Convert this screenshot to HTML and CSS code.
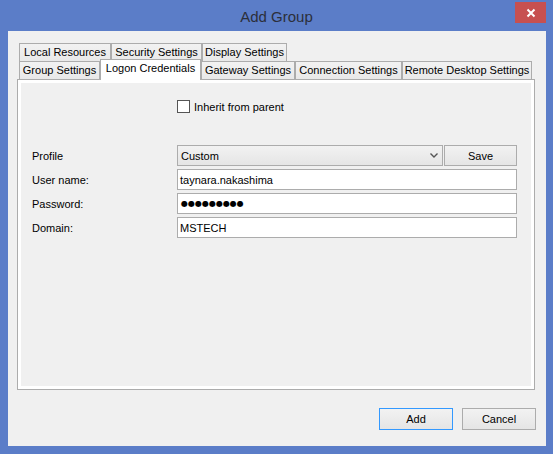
FILE: index.html
```html
<!DOCTYPE html>
<html>
	<head>
		<title>Add Group</title>
		<link rel="stylesheet" href="styles.css">
	</head>
	<body>
		<div class="window">
			<div class="titlebar">
				<span></span>
				<div class="title">Add Group</div>
				<div class="closeButton">
					<svg width="10" height="10" viewBox="0 0 10 10">
						<path d="M1.5 1.5 L8.5 8.5 M8.5 1.5 L1.5 8.5" stroke="#fff" stroke-width="2" fill="none"/>
					</svg>
				</div>
			</div>
			<div class="client">
				<div class="tabControl">
					<div class="tabRow">
						<div class="tab tabLocal">Local Resources</div>
						<div class="tab tabSecurity">Security Settings</div>
						<div class="tab tabDisplay">Display Settings</div>
					</div>
					<div class="tabRow">
						<div class="tab tabGroup">Group Settings</div>
						<div class="tab tabLogon selected">Logon Credentials</div>
						<div class="tab tabGateway">Gateway Settings</div>
						<div class="tab tabConnection">Connection Settings</div>
						<div class="tab tabRemote">Remote Desktop Settings</div>
					</div>
					<div class="tabPanel">
						<div class="tabPage">
							<div class="inheritRow">
								<span class="checkbox"></span>
								<span>Inherit from parent</span>
							</div>
							<div class="credentialsForm">
								<div class="fieldLabel">Profile</div>
								<div class="profileRow">
									<div class="comboBox">
										<span>Custom</span>
										<svg width="8" height="5" viewBox="0 0 8 5">
											<path d="M0.5 0.5 L4 4 L7.5 0.5" stroke="#555" stroke-width="1.4" fill="none"/>
										</svg>
									</div>
									<div class="button saveButton">Save</div>
								</div>
								<div class="fieldLabel">User name:</div>
								<div class="textBox">taynara.nakashima</div>
								<div class="fieldLabel">Password:</div>
								<div class="textBox passwordBox">●●●●●●●●●</div>
								<div class="fieldLabel">Domain:</div>
								<div class="textBox">MSTECH</div>
							</div>
						</div>
					</div>
				</div>
				<div class="dialogButtons">
					<div class="button default">Add</div>
					<div class="button">Cancel</div>
				</div>
			</div>
		</div>
	</body>
</html>
```

FILE: styles.css
```css
html, body {
	margin: 0px;
	padding: 0px;
}

body {
	width: 553px;
	height: 454px;
	background-color: #5b7dc8;
	font-family: "Liberation Sans", Arial, sans-serif;
	font-size: 11px;
	color: #000;
	overflow: hidden;
}

.window {
	display: flex;
	flex-direction: column;
	height: 100%;
}

.titlebar {
	display: grid;
	grid-template-columns: 1fr auto 1fr;
	height: 31px;
	flex-shrink: 0;
}

.title {
	font-size: 15px;
	color: #2b2f3a;
	padding-top: 9px;
	line-height: 15px;
}

.closeButton {
	justify-self: end;
	display: flex;
	align-items: center;
	justify-content: center;
	width: 31px;
	height: 21px;
	margin-top: 2px;
	margin-right: 7px;
	background-color: #c75050;
}

.client {
	display: flex;
	flex-direction: column;
	height: 415px;
	margin: 0px 7px 8px 8px;
	padding: 12px 10px 0px 9px;
	box-sizing: border-box;
	background-color: #f0f0f0;
}

.tabControl {
	width: 518px;
	display: flex;
	flex-direction: column;
}

.tabRow {
	display: flex;
	height: 18px;
	padding-left: 2px;
	align-items: flex-start;
}

.tab {
	box-sizing: border-box;
	height: 19px;
	border: 1px solid #acacac;
	border-bottom: none;
	background: linear-gradient(#f2f2f2, #e8e8e8);
	display: flex;
	align-items: center;
	justify-content: center;
	white-space: nowrap;
	line-height: 13px;
	padding-bottom: 1px;
}

.tabLocal { width: 92px; }
.tabSecurity { width: 91px; }
.tabDisplay { width: 85px; }
.tabGroup { width: 81px; }
.tabLogon { width: 101px; }
.tabGateway { width: 94px; }
.tabConnection { width: 107px; }
.tabRemote { width: 130px; }

.tab.selected {
	position: relative;
	z-index: 1;
	height: 21px;
	margin-top: -2px;
	background: #fff;
	padding-bottom: 3px;
}

.tabPanel {
	height: 311px;
	box-sizing: border-box;
	border: 1px solid #acacac;
	background-color: #fff;
	padding: 3px;
}

.tabPage {
	height: 100%;
	background-color: #f0f0f0;
	display: flex;
	flex-direction: column;
}

.inheritRow {
	display: flex;
	align-items: center;
	height: 13px;
	margin-top: 17px;
	padding-left: 156px;
	gap: 4px;
}

.checkbox {
	width: 13px;
	height: 13px;
	box-sizing: border-box;
	border: 1px solid #555;
	background-color: #fff;
}

.credentialsForm {
	display: grid;
	grid-template-columns: 145px 340px;
	grid-auto-rows: 21px;
	row-gap: 3px;
	margin-top: 32px;
	margin-left: 11px;
}

.fieldLabel {
	display: flex;
	align-items: center;
}

.profileRow {
	display: flex;
	gap: 1px;
}

.comboBox {
	width: 266px;
	box-sizing: border-box;
	border: 1px solid #acacac;
	background: linear-gradient(#f2f2f2, #e5e5e5);
	display: flex;
	align-items: center;
	justify-content: space-between;
	padding: 0px 4px 0px 3px;
}

.textBox {
	box-sizing: border-box;
	border: 1px solid #acacac;
	background-color: #fff;
	display: flex;
	align-items: center;
	padding-left: 2px;
}

.passwordBox {
	font-family: "DejaVu Sans", sans-serif;
	font-size: 8px;
	padding-left: 3px;
}

.button {
	box-sizing: border-box;
	border: 1px solid #acacac;
	background: linear-gradient(#f2f2f2, #e5e5e5);
	display: flex;
	align-items: center;
	justify-content: center;
}

.saveButton {
	width: 73px;
}

.dialogButtons {
	display: flex;
	justify-content: flex-end;
	gap: 9px;
	margin-top: 18px;
}

.dialogButtons .button {
	width: 74px;
	height: 22px;
}

.button.default {
	border-color: #3399ff;
}
```
